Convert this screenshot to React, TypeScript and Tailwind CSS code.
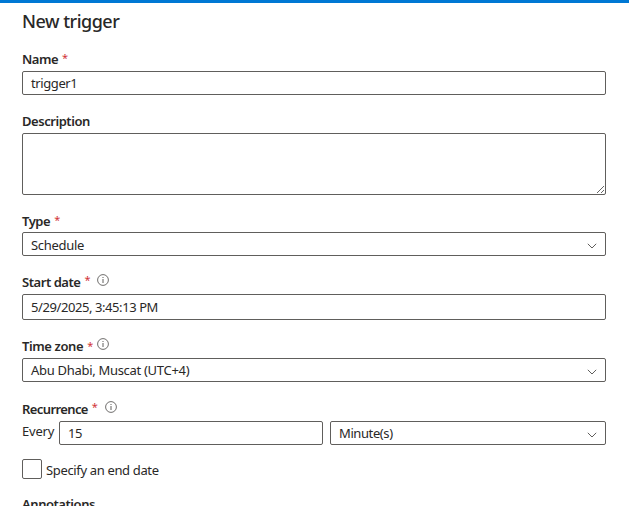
import type { ReactNode } from "react";

function InfoIcon({ className = "" }: { className?: string }) {
  return (
    <svg className={`mt-px size-3 shrink-0 ${className}`} viewBox="0 0 12 12" fill="none" stroke="#605e5c">
      <circle cx="6" cy="6" r="5.4" strokeWidth="0.9" />
      <path d="M6 5v4M6 3v1" strokeWidth="1" />
    </svg>
  );
}

function Chevron() {
  return (
    <svg className="mt-[4px] mr-[8px] h-[6px] w-[10px] shrink-0" viewBox="0 0 10 6" fill="none" stroke="#605e5c" strokeWidth="1">
      <path d="M0.8 0.8 5 5 9.2 0.8" />
    </svg>
  );
}

function Label({ text, tracking, className = "", children }: { text: string; tracking: string; className?: string; children?: ReactNode }) {
  return (
    <div className={`flex h-[18px] items-start leading-[18px] ${className}`}>
      <span className={`font-[570] whitespace-nowrap ${tracking}`}>{text}</span>
      {children}
    </div>
  );
}

function Star({ className = "" }: { className?: string }) {
  return <span className={`ml-1 w-[6px] shrink-0 text-[11px] text-[#d13438] ${className}`}>*</span>;
}

const box = "flex items-center justify-between rounded-[2px] border border-[#605e5c] bg-white pl-2 whitespace-nowrap";

export default function App() {
  return (
    <div className="h-[506px] w-[629px] overflow-hidden border-t-[3px] border-[#0078d4] bg-white pr-[23px] pl-[22px] font-['Noto_Sans','Open_Sans',sans-serif] text-[13px] text-[#292827]">
      <h1 className="mt-[6px] h-[23px] text-[18px] leading-6 font-medium tracking-[-0.5px] whitespace-nowrap">New trigger</h1>

      <Label text="Name" tracking="tracking-[-0.5px]" className="mt-[18px]"><Star className="-mt-px" /></Label>
      <div className={`${box} mt-[3px] h-6`}><span className="mt-px tracking-[-0.4px]">trigger1</span></div>

      <Label text="Description" tracking="tracking-[-0.45px]" className="mt-[17px]" />
      <textarea aria-label="Description" className="mt-[3px] block h-[62px] w-full resize rounded-[2px] border border-[#605e5c] bg-white" />

      <Label text="Type" tracking="tracking-[-0.45px]" className="mt-[17px]"><Star className="-mt-px" /></Label>
      <div className={`${box} mt-[2px] h-6`}><span className="mt-[3px] tracking-[-0.3px]">Schedule</span><Chevron /></div>

      <Label text="Start date" tracking="tracking-[-0.45px]" className="mt-[17px]"><Star className="-mt-[2px]" /><InfoIcon className="ml-[7px]" /></Label>
      <div className={`${box} mt-[3px] h-[26px]`}><span className="mt-px tracking-[-0.42px]">5/29/2025, 3:45:13 PM</span></div>

      <Label text="Time zone" tracking="tracking-[-0.4px]" className="mt-[17px]"><Star /><InfoIcon className="ml-1" /></Label>
      <div className={`${box} mt-[3px] h-6`}><span className="mt-px tracking-[-0.3px]">Abu Dhabi, Muscat (UTC+4)</span><Chevron /></div>

      <Label text="Recurrence" tracking="tracking-[-0.6px]" className="mt-[18px]"><Star className="-mt-[2px]" /><InfoIcon className="ml-[7px]" /></Label>
      <div className="mt-[3px] flex h-6">
        <span className="w-[37px] shrink-0 leading-[20px] tracking-[-0.2px]">Every</span>
        <div className={`${box} w-[264px]`}><span className="mt-px tracking-[-0.5px]">15</span></div>
        <div className={`${box} ml-[7px] flex-1`}><span className="mt-px tracking-[-0.4px]">Minute(s)</span><Chevron /></div>
      </div>

      <div className="mt-[14px] flex h-5 items-center">
        <span className="size-5 shrink-0 rounded-[2px] border border-[#605e5c]" />
        <span className="mt-[3px] ml-1 tracking-[-0.35px] whitespace-nowrap">Specify an end date</span>
      </div>

      <Label text="Annotations" tracking="tracking-[-0.45px]" className="mt-[16px]" />
    </div>
  );
}
